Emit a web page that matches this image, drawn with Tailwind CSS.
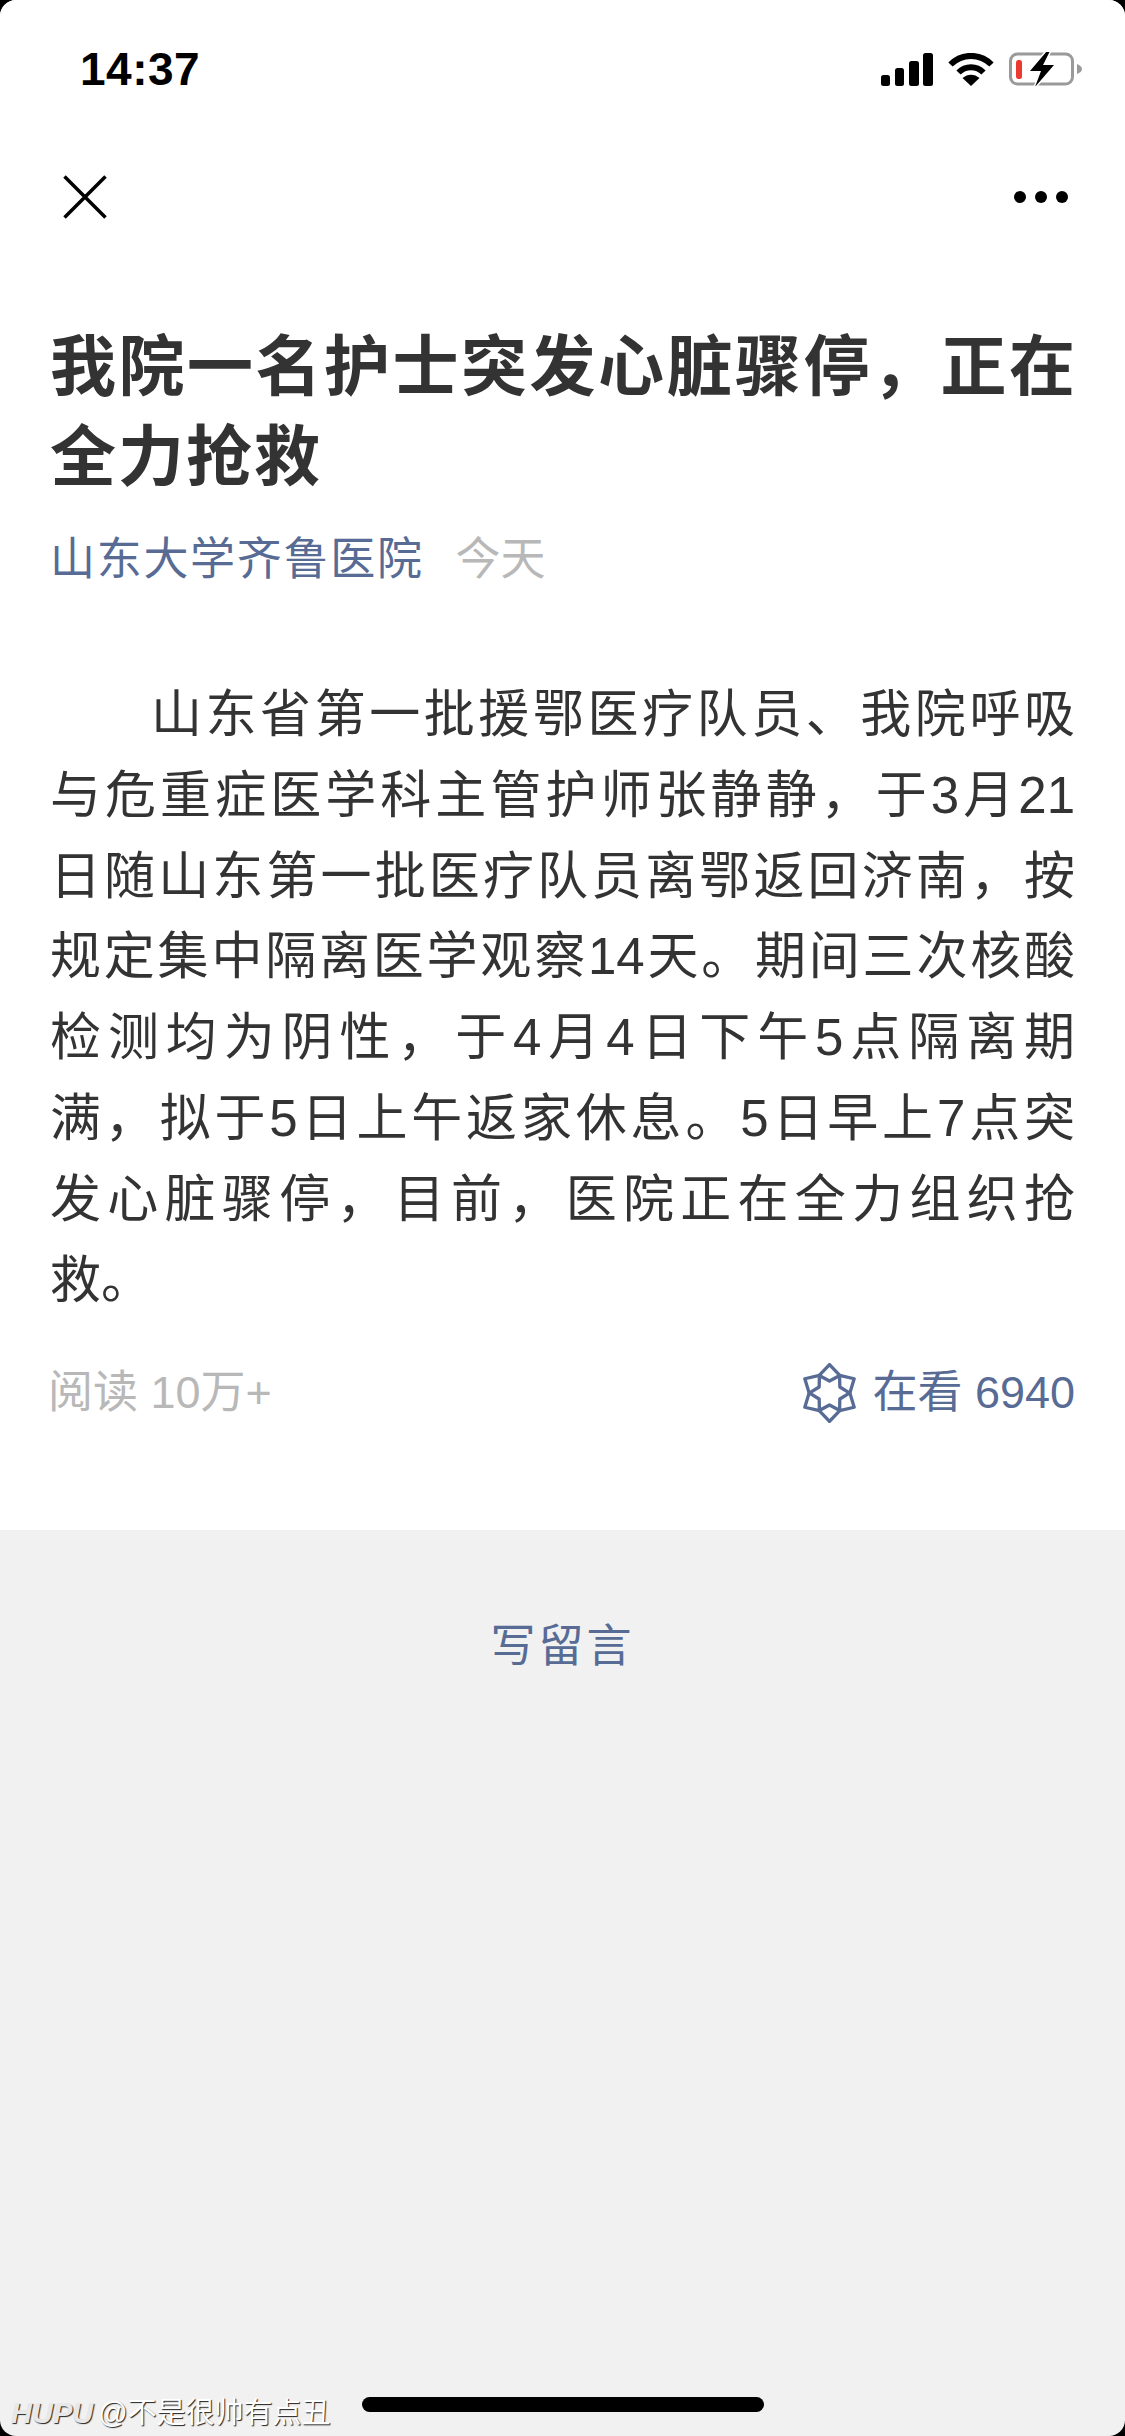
<!DOCTYPE html>
<html lang="zh-CN">
<head>
    <meta charset="UTF-8">
    <meta name="viewport" content="width=device-width, initial-scale=1.0">
    <title>我院一名护士突发心脏骤停，正在全力抢救</title>
    <script src="https://cdn.jsdelivr.net/npm/@tailwindcss/browser@4"></script>
</head>
<body class="bg-black">
    <div class="relative flex flex-col w-[1125px] h-[2436px] overflow-hidden rounded-[16px] bg-[#f1f1f1] font-['Liberation_Sans','Noto_Sans_CJK_SC',sans-serif]">

        <!-- white article area -->
        <div class="flex flex-col h-[1530px] bg-white">

            <!-- status bar -->
            <div class="flex items-center justify-between h-[138px] pl-[80px] pr-[43px]">
                <span class="text-[46px] leading-none font-bold text-black tracking-[0.5px]">14:37</span>
                <div class="flex items-center gap-[15px]">
                    <svg width="52" height="33" viewBox="0 0 52 33" fill="#000">
                        <rect x="0" y="22" width="9" height="11" rx="2.5"/>
                        <rect x="14" y="15" width="9" height="18" rx="2.5"/>
                        <rect x="28" y="8" width="10" height="25" rx="2.5"/>
                        <rect x="42" y="0" width="10" height="33" rx="2.5"/>
                    </svg>
                    <svg width="46" height="33" viewBox="0 0 46 33" fill="none" stroke="#000" stroke-width="6">
                        <path d="M2.5 11.5C14 0 32 0 43.5 11.5"/>
                        <path d="M10.5 19.5C17.5 12.5 28.5 12.5 35.5 19.5"/>
                        <path d="M14.5 25L23 33L31.5 25C26.5 20.5 19.5 20.5 14.5 25Z" fill="#000" stroke="none"/>
                    </svg>
                    <svg width="73" height="34" viewBox="0 0 73 34" fill="none">
                        <rect x="1.5" y="2" width="62" height="30" rx="7" stroke="#9a9a9a" stroke-width="3"/>
                        <path d="M68 12C71 13 73 15 73 17C73 19 71 21 68 22Z" fill="#9a9a9a"/>
                        <rect x="7" y="8" width="6" height="19" rx="2.5" fill="#eb3b30"/>
                        <path d="M38 -1L21 19H32L26 35L45 13H34L41 -1Z" fill="#000" stroke="#fff" stroke-width="3" paint-order="stroke"/>
                    </svg>
                </div>
            </div>

            <!-- nav -->
            <div class="flex items-center justify-between h-[118px] pl-[63px] pr-[57px]">
                <svg width="44" height="44" viewBox="0 0 44 44" fill="none" stroke="#000" stroke-width="3.5">
                    <path d="M1.5 1.5L42.5 42.5M42.5 1.5L1.5 42.5"/>
                </svg>
                <div class="flex items-center gap-[9px]">
                    <span class="w-[12px] h-[12px] rounded-full bg-black"></span>
                    <span class="w-[12px] h-[12px] rounded-full bg-black"></span>
                    <span class="w-[12px] h-[12px] rounded-full bg-black"></span>
                </div>
            </div>

            <!-- title -->
            <div class="mt-[66px] px-[50px] text-[66px] leading-[90px] font-bold text-[#333333]">
                <div class="[text-align-last:justify]">我院一名护士突发心脏骤停，正在</div>
                <div class="tracking-[2px]">全力抢救</div>
            </div>

            <!-- source -->
            <div class="flex mt-[28px] pl-[50px] text-[45px] leading-[60px]">
                <span class="text-[#576b95] tracking-[1.7px]">山东大学齐鲁医院</span>
                <span class="ml-[32px] text-[#b8b8b8]">今天</span>
            </div>

            <!-- article body -->
            <div class="mt-[85px] px-[50px] text-[51px] leading-[80.8px] text-[#333333]">
                <div class="pl-[101px] [text-align-last:justify]">山东省第一批援鄂医疗队员、我院呼吸</div>
                <div class="[text-align-last:justify]">与危重症医学科主管护师张静静，于3月21</div>
                <div class="[text-align-last:justify]">日随山东第一批医疗队员离鄂返回济南，按</div>
                <div class="[text-align-last:justify]">规定集中隔离医学观察14天。期间三次核酸</div>
                <div class="[text-align-last:justify]">检测均为阴性，于4月4日下午5点隔离期</div>
                <div class="[text-align-last:justify]">满，拟于5日上午返家休息。5日早上7点突</div>
                <div class="[text-align-last:justify]">发心脏骤停，目前，医院正在全力组织抢</div>
                <div>救。</div>
            </div>

            <!-- read count / wow -->
            <div class="flex items-center justify-between mt-[42px] pl-[48px] pr-[50px] text-[45px] leading-[60px]">
                <span class="text-[#b8b8b8]">阅读 10万+</span>
                <div class="flex items-center gap-[16px] text-[#576b95]">
                    <svg width="53" height="60" viewBox="-80 -90 160 180" fill="none" stroke="#576b95" stroke-width="10" stroke-linejoin="round">
                        <path id="petal" d="M0 -86L31 -53L0 -36L-31 -53Z"/>
                        <path d="M0 -86L31 -53L0 -36L-31 -53Z" transform="rotate(60)"/>
                        <path d="M0 -86L31 -53L0 -36L-31 -53Z" transform="rotate(120)"/>
                        <path d="M0 -86L31 -53L0 -36L-31 -53Z" transform="rotate(180)"/>
                        <path d="M0 -86L31 -53L0 -36L-31 -53Z" transform="rotate(240)"/>
                        <path d="M0 -86L31 -53L0 -36L-31 -53Z" transform="rotate(300)"/>
                    </svg>
                    <span>在看 6940</span>
                </div>
            </div>
        </div>

        <!-- comment link -->
        <div class="mt-[85px] text-center text-[45px] leading-[64px] tracking-[3px] text-[#576b95]">写留言</div>

        <!-- watermark over the screenshot -->
        <div class="absolute left-[11px] bottom-[6px] flex items-center gap-[5px] text-[29px] leading-[34px] text-white [text-shadow:1px_1px_1px_#222]">
            <span class="italic font-bold text-[#e8e8e8]">HUPU</span>
            <span>@不是很帅有点丑</span>
        </div>

        <!-- home indicator -->
        <div class="absolute left-[362px] bottom-[24px] w-[402px] h-[15px] rounded-full bg-black"></div>
    </div>
</body>
</html>
